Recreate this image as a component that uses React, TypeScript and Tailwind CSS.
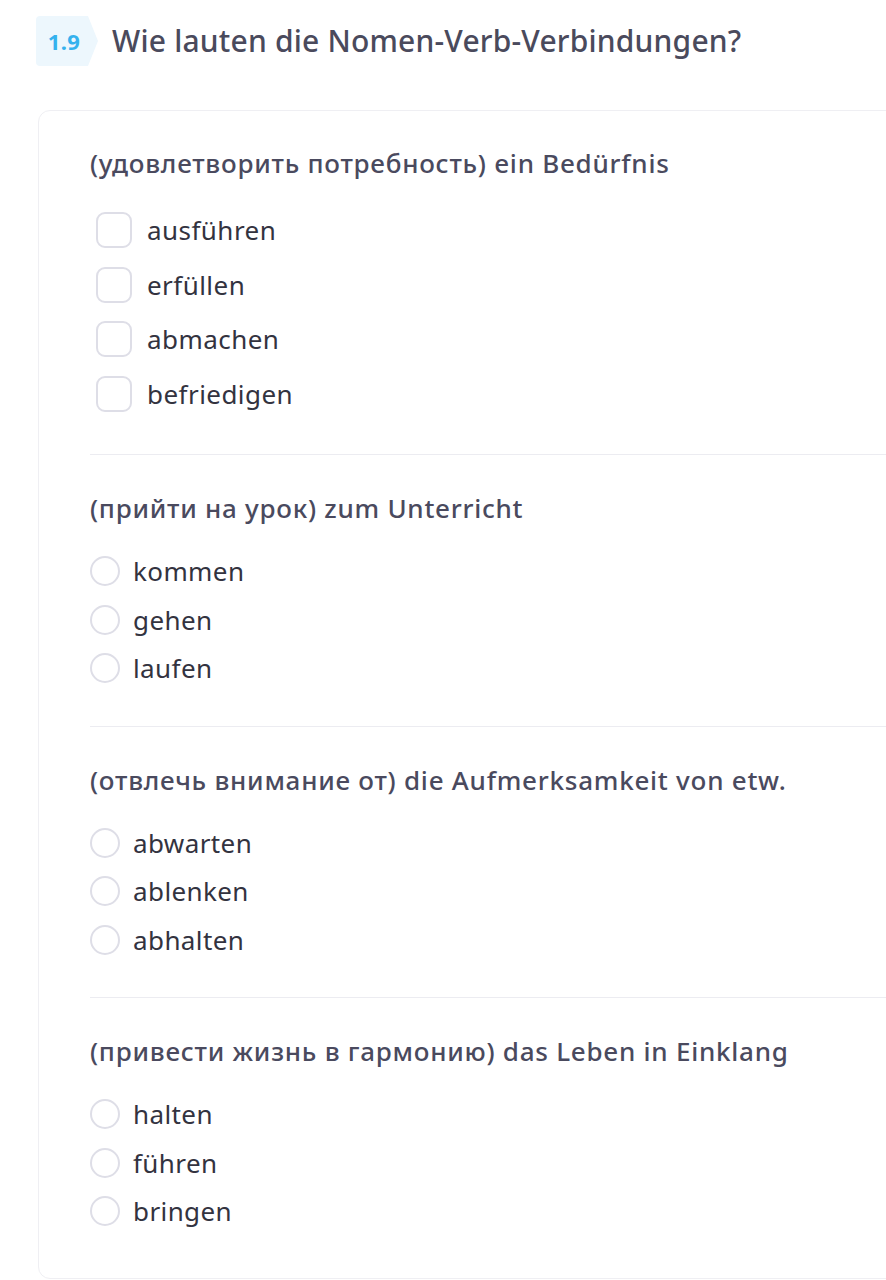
const questions = [
  {
    prompt: '(удовлетворить потребность) ein Bedürfnis',
    kind: 'checkbox',
    options: ['ausführen', 'erfüllen', 'abmachen', 'befriedigen'],
  },
  {
    prompt: '(прийти на урок) zum Unterricht',
    kind: 'radio',
    options: ['kommen', 'gehen', 'laufen'],
  },
  {
    prompt: '(отвлечь внимание от) die Aufmerksamkeit von etw.',
    kind: 'radio',
    options: ['abwarten', 'ablenken', 'abhalten'],
  },
  {
    prompt: '(привести жизнь в гармонию) das Leben in Einklang',
    kind: 'radio',
    options: ['halten', 'führen', 'bringen'],
  },
]

function Badge() {
  return (
    <div className="relative h-[50px] w-[62px] shrink-0">
      <svg className="absolute inset-0" width="62" height="50" viewBox="0 0 62 50">
        <path d="M4 0 H52 L62 25 L52 50 H4 Q0 50 0 46 V4 Q0 0 4 0 Z" fill="#edf7fd" />
      </svg>
      <span className="relative flex h-full w-[56px] items-center justify-center text-[22px] font-bold tracking-[0.3px] text-[#35b2ee]">
        1.9
      </span>
    </div>
  )
}

export default function App() {
  return (
    <div
      className="min-h-[1280px] w-full overflow-hidden bg-white"
      style={{ fontFamily: '"Noto Sans", "Open Sans", sans-serif' }}
    >
      <div className="flex items-center gap-[14px] pl-[36px] pt-[16px]">
        <Badge />
        <h1 className="text-[30px] font-medium leading-[50px] tracking-[0.2px] text-[#4a4a5c]">
          Wie lauten die Nomen-Verb-Verbindungen?
        </h1>
      </div>

      <div className="ml-[38px] mt-[44px] w-[880px] rounded-[12px] border border-[#efeff3] pl-[51px]">
        {questions.map((q, i) => (
          <section
            key={i}
            className={`${i > 0 ? 'border-t border-[#ececf1] pt-[37px]' : 'pt-[36px]'} ${
              i === questions.length - 1 ? 'pb-[42px]' : i === 0 ? 'pb-[33px]' : 'pb-[33px]'
            }`}
          >
            <p className="text-[26px] font-medium leading-[32px] tracking-[0.75px] text-[#4a4a5e]">
              {q.prompt}
            </p>
            <ul className={q.kind === 'checkbox' ? 'mt-[24px]' : 'mt-[23px]'}>
              {q.options.map((o) =>
                q.kind === 'checkbox' ? (
                  <li key={o} className="flex h-[54.5px] items-center gap-[15px] pl-[6px]">
                    <span className="h-[36px] w-[36px] rounded-[9px] border-2 border-[#dedee7] bg-white" />
                    <span className="text-[26px] leading-none tracking-[0.45px] text-[#33333f]">{o}</span>
                  </li>
                ) : (
                  <li key={o} className="flex h-[48.5px] items-center gap-[13px]">
                    <span className="h-[30px] w-[30px] rounded-full border-2 border-[#dedee7] bg-white" />
                    <span className="text-[26px] leading-none tracking-[0.4px] text-[#33333f]">{o}</span>
                  </li>
                )
              )}
            </ul>
          </section>
        ))}
      </div>
    </div>
  )
}
